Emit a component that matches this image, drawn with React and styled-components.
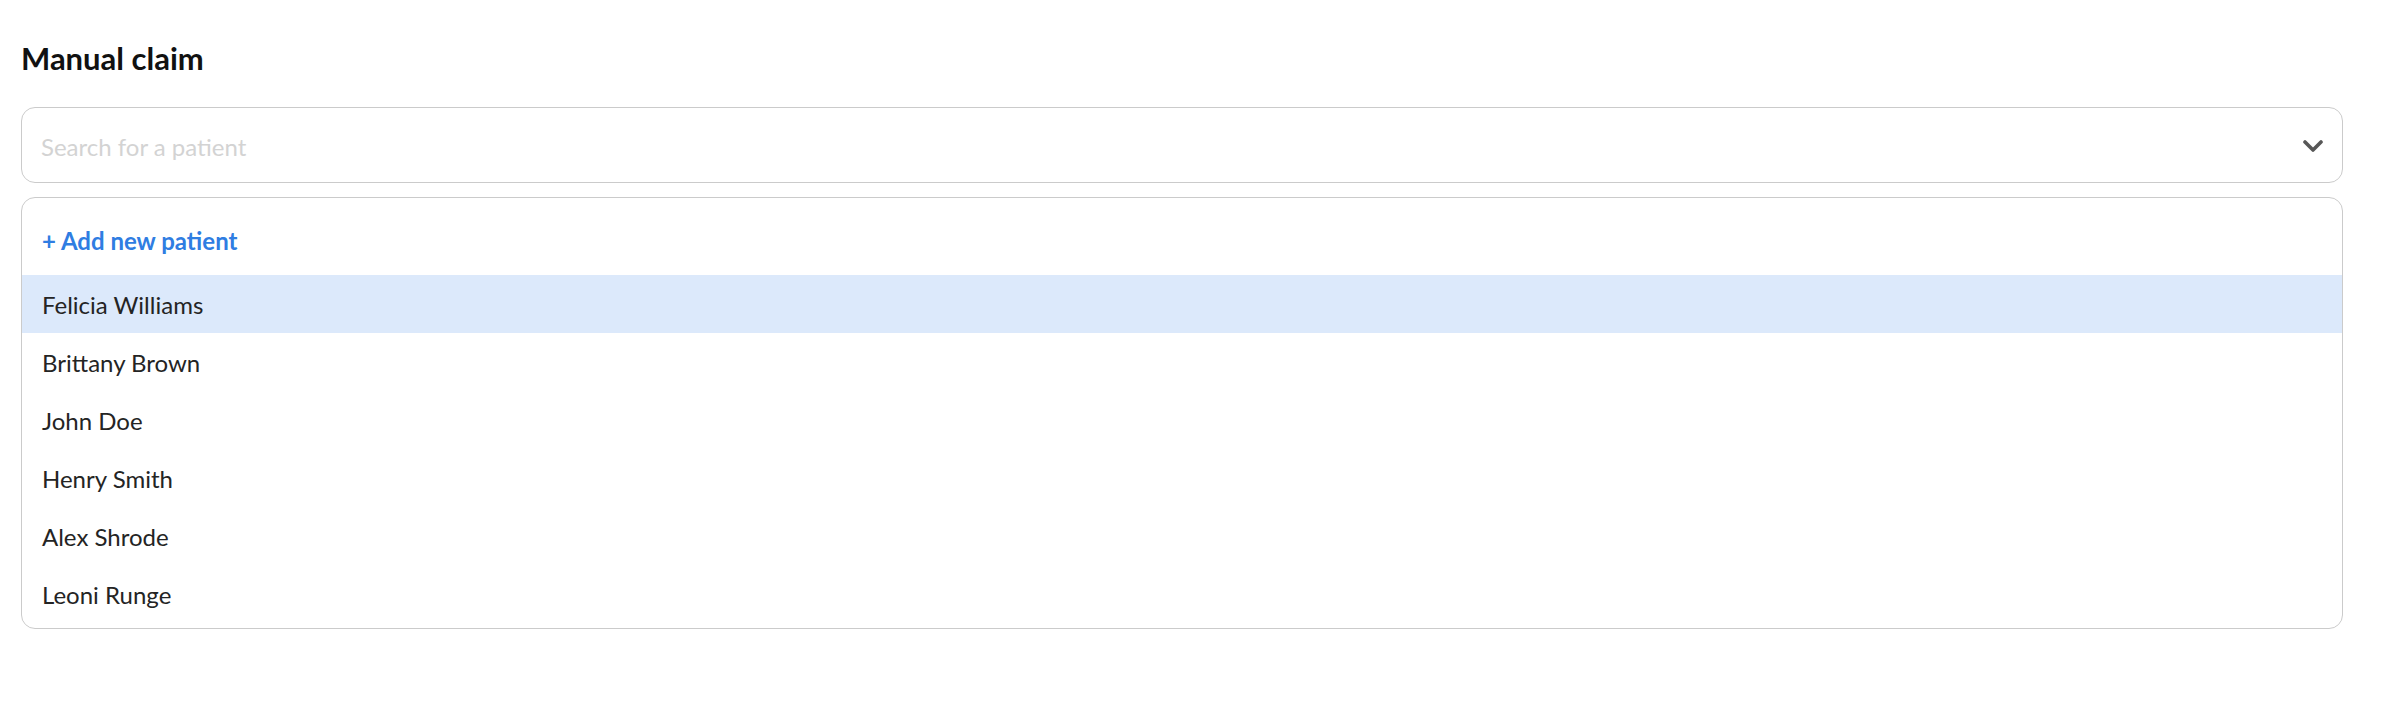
import React from 'react';
import styled, { createGlobalStyle } from 'styled-components';

const GlobalStyle = createGlobalStyle`
  html, body {
    margin: 0;
    padding: 0;
    background: #ffffff;
  }
  body {
    font-family: Lato, "Noto Sans", "Liberation Sans", sans-serif;
    color: #222222;
  }
`;

const Page = styled.div`
  padding: 0 39px 0 21px;
`;

const Title = styled.h2`
  margin: 0;
  padding-top: 38px;
  font-size: 31px;
  line-height: 40px;
  font-weight: 700;
  color: #111111;
`;

const SelectBox = styled.div`
  margin-top: 29px;
  height: 76px;
  box-sizing: border-box;
  border: 1px solid #cbcbcb;
  border-radius: 14px;
  display: flex;
  align-items: center;
  justify-content: space-between;
  padding: 2px 19px 0 19px;
  background: #ffffff;
`;

const Placeholder = styled.span`
  font-size: 24px;
  color: #d3d3d3;
`;

const Chevron = styled.svg`
  width: 20px;
  height: 12px;
  color: #575757;
`;

const Menu = styled.div`
  margin-top: 14px;
  box-sizing: border-box;
  border: 1px solid #cbcbcb;
  border-radius: 14px;
  padding-bottom: 5px;
  overflow: hidden;
  background: #ffffff;
`;

const AddRow = styled.div`
  height: 77px;
  box-sizing: border-box;
  padding: 7px 20px 0;
  display: flex;
  align-items: center;
  font-size: 24px;
  font-weight: 700;
  color: #2f7de2;
`;

const Option = styled.div`
  height: 58px;
  display: flex;
  align-items: center;
  padding: 0 20px;
  box-sizing: border-box;
  font-size: 24px;
  color: #242424;
  background: ${({ $active }) => ($active ? '#dce9fb' : 'transparent')};
`;

const patients = [
  'Felicia Williams',
  'Brittany Brown',
  'John Doe',
  'Henry Smith',
  'Alex Shrode',
  'Leoni Runge',
];

export default function App() {
  return (
    <>
      <GlobalStyle />
      <Page>
        <Title>Manual claim</Title>
        <SelectBox>
          <Placeholder>Search for a patient</Placeholder>
          <Chevron viewBox="0 0 20 12" fill="none">
            <path
              d="M2 2l8 8 8-8"
              stroke="currentColor"
              strokeWidth="3.6"
              strokeLinecap="round"
              strokeLinejoin="round"
            />
          </Chevron>
        </SelectBox>
        <Menu>
          <AddRow>+ Add new patient</AddRow>
          {patients.map((name, i) => (
            <Option key={name} $active={i === 0}>
              {name}
            </Option>
          ))}
        </Menu>
      </Page>
    </>
  );
}
